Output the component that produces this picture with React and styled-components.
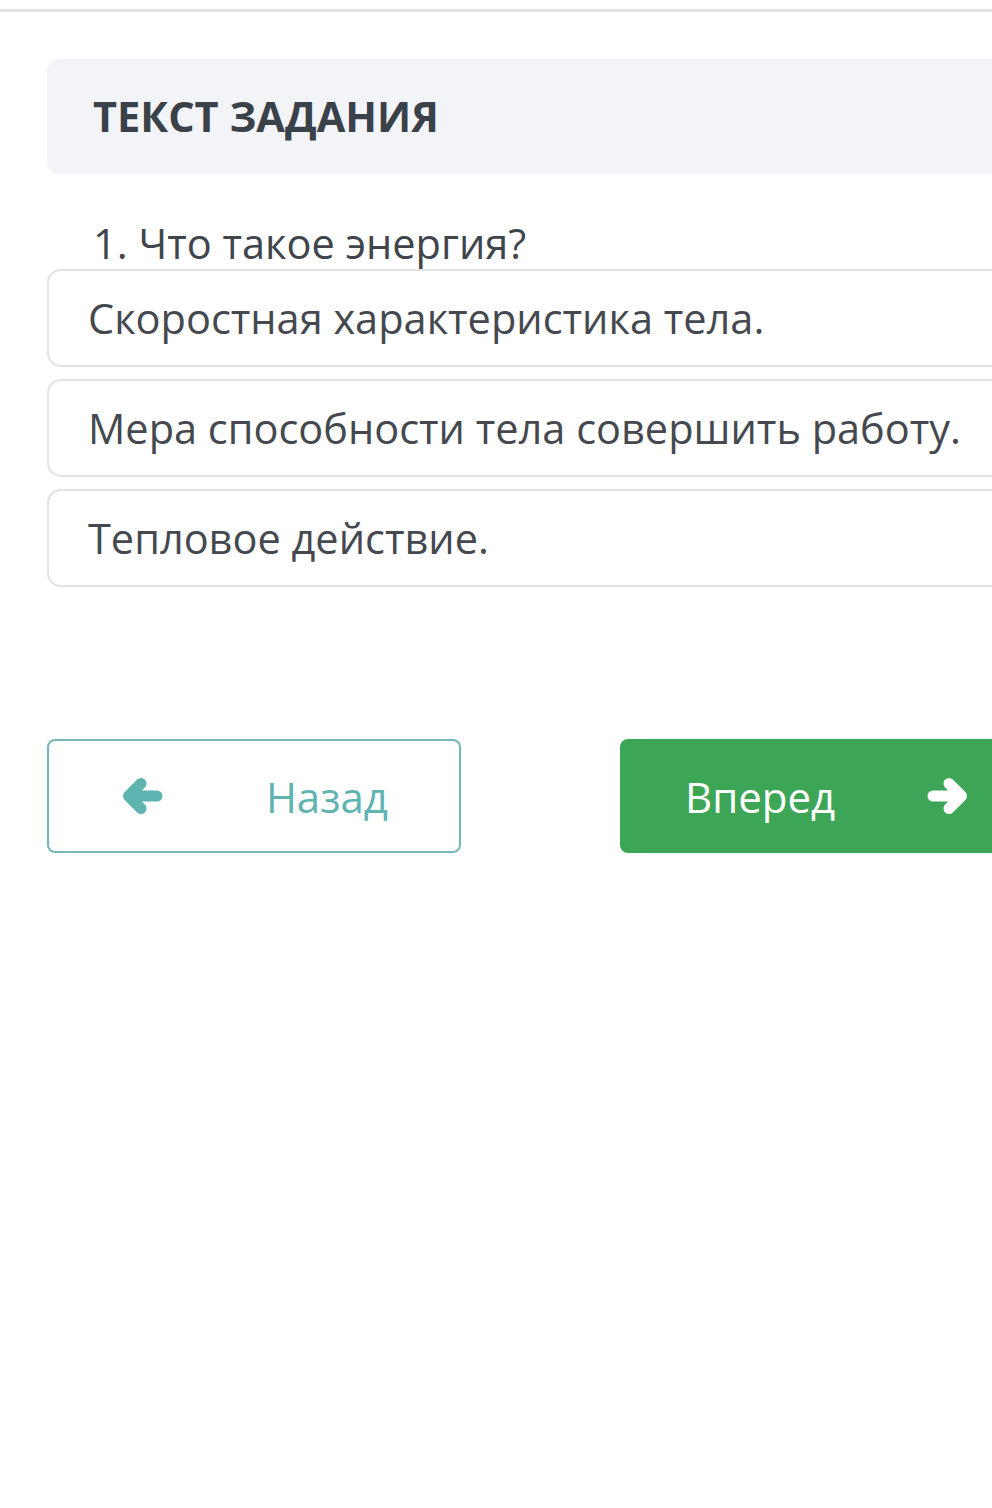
import React from "react";
import styled, { createGlobalStyle } from "styled-components";

const Global = createGlobalStyle`
  html, body { margin: 0; padding: 0; background: #ffffff; overflow: hidden; }
  body { font-family: "Open Sans", "Noto Sans", sans-serif; }
  * { box-sizing: border-box; }
`;

const TopRule = styled.div`
  margin-top: 9px;
  height: 3px;
  width: 100%;
  background: #e2e2e2;
`;

const Page = styled.div`
  width: 1081px;
  padding: 0 47px;
`;

const Header = styled.div`
  margin-top: 47px;
  height: 115px;
  background: #f3f4f7;
  border-radius: 12px;
  padding-left: 46px;
  display: flex;
  align-items: center;
`;

const Title = styled.h1`
  margin: 0;
  font-size: 41.5px;
  font-weight: 700;
  color: #3b4149;
  line-height: 1;
`;

const Question = styled.div`
  margin-top: 43px;
  padding-left: 46px;
  font-size: 41.5px;
  line-height: 52px;
  color: #40454b;
  height: 52px;
`;

const Options = styled.div`
  display: flex;
  flex-direction: column;
  gap: 12px;
`;

const Option = styled.div`
  height: 98px;
  border: 2px solid #e3e3e3;
  border-radius: 14px;
  padding-left: 39px;
  display: flex;
  align-items: center;
  font-size: 41.5px;
  color: #45494f;
  background: #ffffff;
`;

const Nav = styled.div`
  margin-top: 152px;
  display: flex;
  justify-content: space-between;
`;

const NavButton = styled.button`
  width: 414px;
  height: 114px;
  display: flex;
  align-items: center;
  justify-content: space-between;
  padding: 0 ${(p) => p.$padR}px 0 ${(p) => p.$padL}px;
  border-radius: 8px;
  font-family: "Open Sans", "Noto Sans", sans-serif;
  font-size: 42px;
  cursor: pointer;
  border: 2px solid ${(p) => (p.$primary ? "#3da556" : "#74b9b6")};
  background: ${(p) => (p.$primary ? "#3da556" : "#ffffff")};
  color: ${(p) => (p.$primary ? "#ffffff" : "#5fb4b1")};
`;

const ArrowSvg = styled.svg`
  width: 41px;
  height: 36px;
  flex-shrink: 0;
  transform: ${(p) => (p.$flip ? "scaleX(-1)" : "none")};
`;

function Arrow({ flip }) {
  return (
    <ArrowSvg $flip={flip} viewBox="0 0 41 36" aria-hidden="true">
      <path
        d="M35 18 H6.5 M19 5.5 L6.5 18 L19 30.5"
        fill="none"
        stroke="currentColor"
        strokeWidth="11"
        strokeLinecap="round"
        strokeLinejoin="round"
      />
    </ArrowSvg>
  );
}

const options = [
  "Скоростная характеристика тела.",
  "Мера способности тела совершить работу.",
  "Тепловое действие.",
];

export default function App() {
  return (
    <>
      <Global />
      <TopRule />
      <Page>
        <Header>
          <Title>ТЕКСТ ЗАДАНИЯ</Title>
        </Header>
        <Question>1. Что такое энергия?</Question>
        <Options>
          {options.map((o) => (
            <Option key={o}>{o}</Option>
          ))}
        </Options>
        <Nav>
          <NavButton $padL={73} $padR={71}>
            <Arrow />
            <span>Назад</span>
          </NavButton>
          <NavButton $primary $padL={63} $padR={64}>
            <span>Вперед</span>
            <Arrow flip />
          </NavButton>
        </Nav>
      </Page>
    </>
  );
}
